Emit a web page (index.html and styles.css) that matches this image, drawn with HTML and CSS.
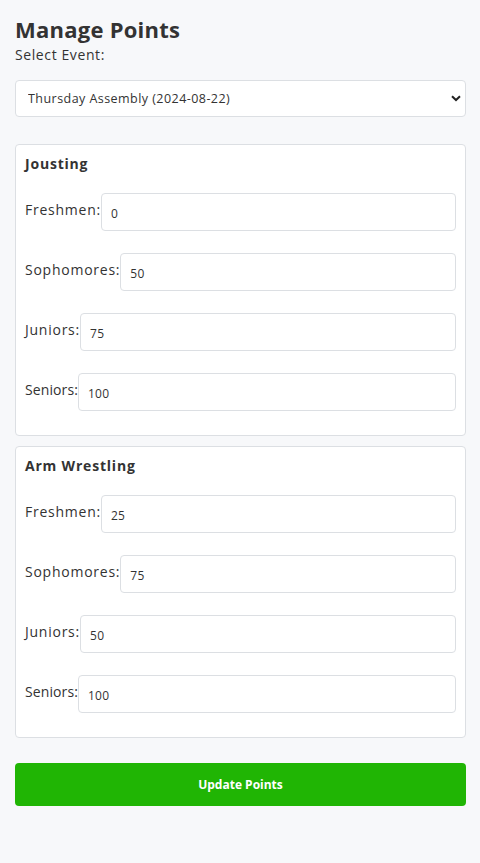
FILE: index.html
```html
<!DOCTYPE html>
<html lang="en">
<head>
<meta charset="utf-8">
<title>Manage Points</title>
<link rel="stylesheet" href="styles.css">
</head>
<body>
<main class="page">
  <h1 class="title">Manage Points</h1>
  <label class="select-label" for="event">Select Event:</label>
  <div class="select-wrap">
    <select id="event" class="select">
      <option>Thursday Assembly (2024-08-22)</option>
    </select>
    <svg class="chevron" width="10" height="7" viewBox="0 0 10 7"><path d="M1 1.2 L5 5 L9 1.2" fill="none" stroke="#222" stroke-width="2"/></svg>
  </div>

  <section class="card">
    <h2 class="card-title">Jousting</h2>
    <div class="rows">
      <div class="row"><label class="row-label">Freshmen:</label><input class="input" value="0"></div>
      <div class="row"><label class="row-label">Sophomores:</label><input class="input" value="50"></div>
      <div class="row"><label class="row-label">Juniors:</label><input class="input" value="75"></div>
      <div class="row"><label class="row-label short">Seniors:</label><input class="input" value="100"></div>
    </div>
  </section>

  <section class="card">
    <h2 class="card-title">Arm Wrestling</h2>
    <div class="rows">
      <div class="row"><label class="row-label">Freshmen:</label><input class="input" value="25"></div>
      <div class="row"><label class="row-label">Sophomores:</label><input class="input" value="75"></div>
      <div class="row"><label class="row-label">Juniors:</label><input class="input" value="50"></div>
      <div class="row"><label class="row-label short">Seniors:</label><input class="input" value="100"></div>
    </div>
  </section>

  <button class="btn">Update Points</button>
</main>
</body>
</html>
```

FILE: styles.css
```css
* { box-sizing: border-box; }
html, body { margin: 0; padding: 0; }
body {
  background: #f7f8fa;
  font-family: "Open Sans", "Noto Sans", sans-serif;
  color: #333;
}
.page {
  padding: 14px 14px 40px 15px;
  display: flex;
  flex-direction: column;
}
.title {
  margin: 0;
  font-size: 22px;
  font-weight: 700;
  line-height: 30px;
  letter-spacing: 0.25px;
  color: #333;
}
.select-label {
  font-size: 14px;
  line-height: 20px;
  letter-spacing: 0.6px;
  margin-top: 1px;
  color: #333;
}
.select-wrap {
  position: relative;
  margin-top: 15px;
}
.select {
  appearance: none;
  -webkit-appearance: none;
  width: 100%;
  height: 37px;
  background: #fff;
  border: 1px solid #dcdfe3;
  border-radius: 4px;
  font-family: inherit;
  font-size: 12.5px;
  letter-spacing: 0.45px;
  color: #333;
  padding: 0 12px;
}
.chevron {
  position: absolute;
  right: 5px;
  top: 15px;
}
.card {
  margin-top: 27px;
  background: #fff;
  border: 1px solid #dcdfe3;
  border-radius: 4px;
  padding: 9px 9px 24px;
}
.card + .card { margin-top: 10px; }
.card-title {
  margin: 0 0 19px;
  font-size: 14px;
  line-height: 20px;
  font-weight: 700;
  letter-spacing: 0.8px;
  color: #333;
}
.rows {
  display: flex;
  flex-direction: column;
  gap: 22px;
}
.row {
  display: flex;
  align-items: center;
}
.row-label {
  font-size: 14px;
  line-height: 19px;
  letter-spacing: 0.75px;
  padding-bottom: 5px;
  color: #333;
  white-space: nowrap;
}
.row-label.short { letter-spacing: 0.1px; }
.input {
  flex: 1;
  min-width: 0;
  height: 38px;
  border: 1px solid #dcdfe3;
  border-radius: 4px;
  background: #fff;
  font-family: inherit;
  font-size: 12px;
  letter-spacing: 0.3px;
  color: #333;
  padding: 3px 9px 0;
}
.btn {
  margin-top: 25px;
  height: 43px;
  border: none;
  border-radius: 4px;
  background: #20b504;
  color: #fff;
  font-family: inherit;
  font-weight: 700;
  font-size: 12px;
}
```
